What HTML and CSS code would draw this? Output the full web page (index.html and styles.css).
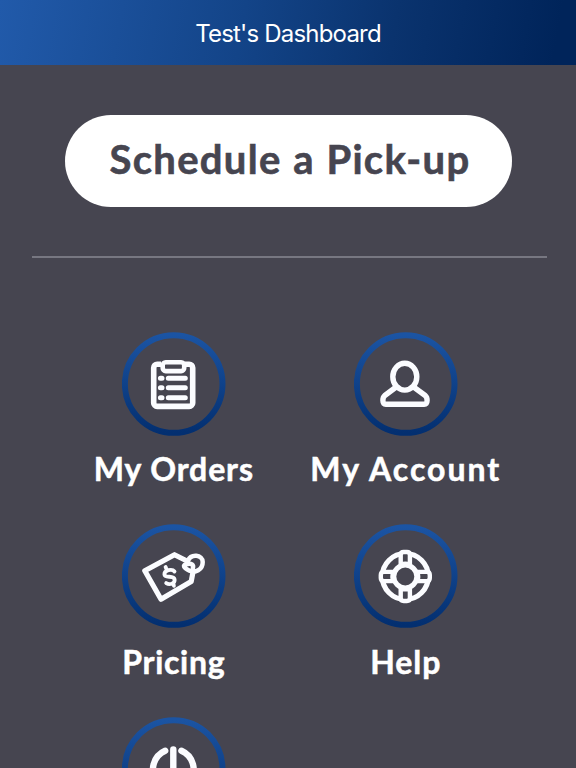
FILE: index.html
```html
<!DOCTYPE html>
<html lang="en">
<head>
<meta charset="utf-8">
<title>Test's Dashboard</title>
<link rel="stylesheet" href="styles.css">
</head>
<body>
<header class="topbar"><h1 class="title">Test's Dashboard</h1></header>
<main>
<button class="schedule"><span class="schedule-text">Schedule a Pick-up</span></button>
<hr class="divider">
<nav class="menu">
<a class="item">
<svg class="icon" viewBox="0 0 104 104"><defs><linearGradient id="ring" x1="0" y1="0" x2="0" y2="1"><stop offset="0" stop-color="#1b54a3"/><stop offset="1" stop-color="#032f70"/></linearGradient></defs>
<circle class="ring" cx="51.7" cy="52" r="48.8"/>
<g class="glyph"><rect x="31.7" y="32.2" width="39" height="42.2" rx="3.5" stroke-width="5.6"/><path class="mask" d="M39 28h24v12H39z"/><rect x="40.7" y="30.3" width="21.5" height="8.8" rx="3" stroke-width="4.6"/><path stroke-width="5" d="M46.3 46.2h17M46.3 55.8h17M46.3 65.7h17M38.4 46.2h1.6M38.4 55.8h1.6M38.4 65.7h1.6"/></g></svg>
<span class="label orders">My Orders</span></a>
<a class="item">
<svg class="icon" viewBox="0 0 104 104"><circle class="ring" cx="51.7" cy="52" r="48.8"/>
<g class="glyph" stroke-width="5.4"><ellipse cx="50.8" cy="44.7" rx="12" ry="13.4"/><path d="M41.5 55.5 30.8 63.5Q28.8 65.3 28.9 68.5Q29 72.2 31.8 72.2H70.2Q73 72.2 73.1 68.5Q73.2 65.3 71.2 63.5L60.3 55.5"/></g></svg>
<span class="label account">My Account</span></a>
<a class="item">
<svg class="icon" viewBox="0 0 104 104"><circle class="ring" cx="51.7" cy="52" r="48.8"/>
<g class="glyph" stroke-width="5.2"><path d="M65.5 37.3 52.5 30.7 22.8 46.8 39 75.2 69.2 57.5 71 48"/><path stroke-width="4.5" d="M66 36.8C69 29.5 80.6 30.5 80.7 38C80.8 46 73 49.2 67.5 46.7C61.5 44 60.5 41 64 40.3C69.5 38.5 72 41 70.8 44.5"/><path stroke-width="3.8" d="M52.5 47.5C50 44.3 42.2 46.3 42.4 50.3C42.6 54.7 51.8 50.7 52.6 55.4C53.3 60 47.2 61 44.2 59.1M44.6 45.7 43.6 43M51.9 61.8 51.2 59.2"/></g></svg>
<span class="label pricing">Pricing</span></a>
<a class="item">
<svg class="icon" viewBox="0 0 104 104"><circle class="ring" cx="51.7" cy="52" r="48.8"/>
<g class="glyph"><circle cx="51.3" cy="52.5" r="23" stroke-width="5.2"/><circle cx="51.3" cy="52.5" r="11.5" stroke-width="5"/>
<g stroke-width="4.4"><path class="lug" d="M46.7 40.5V31Q46.7 28 49.7 28H52.9Q55.9 28 55.9 31V40.5Q51.3 38.8 46.7 40.5Z"/><path class="lug" d="M46.7 64.5V74Q46.7 77 49.7 77H52.9Q55.9 77 55.9 74V64.5Q51.3 66.2 46.7 64.5Z"/><path class="lug" d="M39.3 47.9H29.8Q26.8 47.9 26.8 50.9V54.1Q26.8 57.1 29.8 57.1H39.3Q37.6 52.5 39.3 47.9Z"/><path class="lug" d="M63.3 47.9H72.8Q75.8 47.9 75.8 50.9V54.1Q75.8 57.1 72.8 57.1H63.3Q65 52.5 63.3 47.9Z"/></g></g></svg>
<span class="label help">Help</span></a>
<a class="item">
<svg class="icon" viewBox="0 0 104 104"><circle class="ring" cx="51.7" cy="52" r="48.8"/>
<g class="glyph" stroke-width="6.4"><path d="M51.3 32.5V52M43.2 33.7A20.3 20.3 0 1 0 59.4 33.7"/></g></svg>
</a>
</nav>
</main>
</body>
</html>
```

FILE: styles.css
```css
* { box-sizing: border-box; }
body { margin: 0; height: 768px; overflow: hidden; background: #464550; color: #fff; }
.topbar { height: 65px; display: flex; align-items: center; justify-content: center; padding-top: 3px; background: linear-gradient(100deg, #215aaa 0%, #134488 42%, #0a336e 68%, #00245a 96%); }
.title { margin: 0; font: 400 24px/30px Inter, sans-serif; letter-spacing: -0.8px; white-space: nowrap; }
main { display: flex; flex-direction: column; height: 703px; overflow: hidden; padding-top: 50px; }
.schedule { width: 447px; height: 92px; flex: none; margin-left: 65px; padding: 0 0 5px 3px; border: 0; border-radius: 46px; background: #fff; color: #464550; font: 700 40px/48px Lato, sans-serif; letter-spacing: 1.3px; word-spacing: 0.6px; -webkit-text-stroke: 0.6px #464550; white-space: nowrap; }
.divider { width: 515px; height: 2px; flex: none; margin: 49px 0 0 32px; border: 0; background: #777781; }
.menu { display: grid; grid-template-columns: 232px 232px; grid-auto-rows: 192.5px; padding: 73.7px 0 0 57.8px; }
.item { display: flex; flex-direction: column; align-items: center; }
.icon { width: 104px; height: 104px; flex: none; }
.ring { fill: none; stroke: url(#ring); stroke-width: 6; }
.glyph { fill: none; stroke: #fbfcff; stroke-linecap: round; stroke-linejoin: round; }
.mask, .lug { fill: #464550; }
.mask { stroke: none; }
.label { margin-top: 13.5px; font: 700 32px/40px Lato, sans-serif; white-space: nowrap; letter-spacing: 0.9px; -webkit-text-stroke: 0.5px #fff; }
.account { letter-spacing: 2px; }
.pricing { letter-spacing: 0.7px; }
```
